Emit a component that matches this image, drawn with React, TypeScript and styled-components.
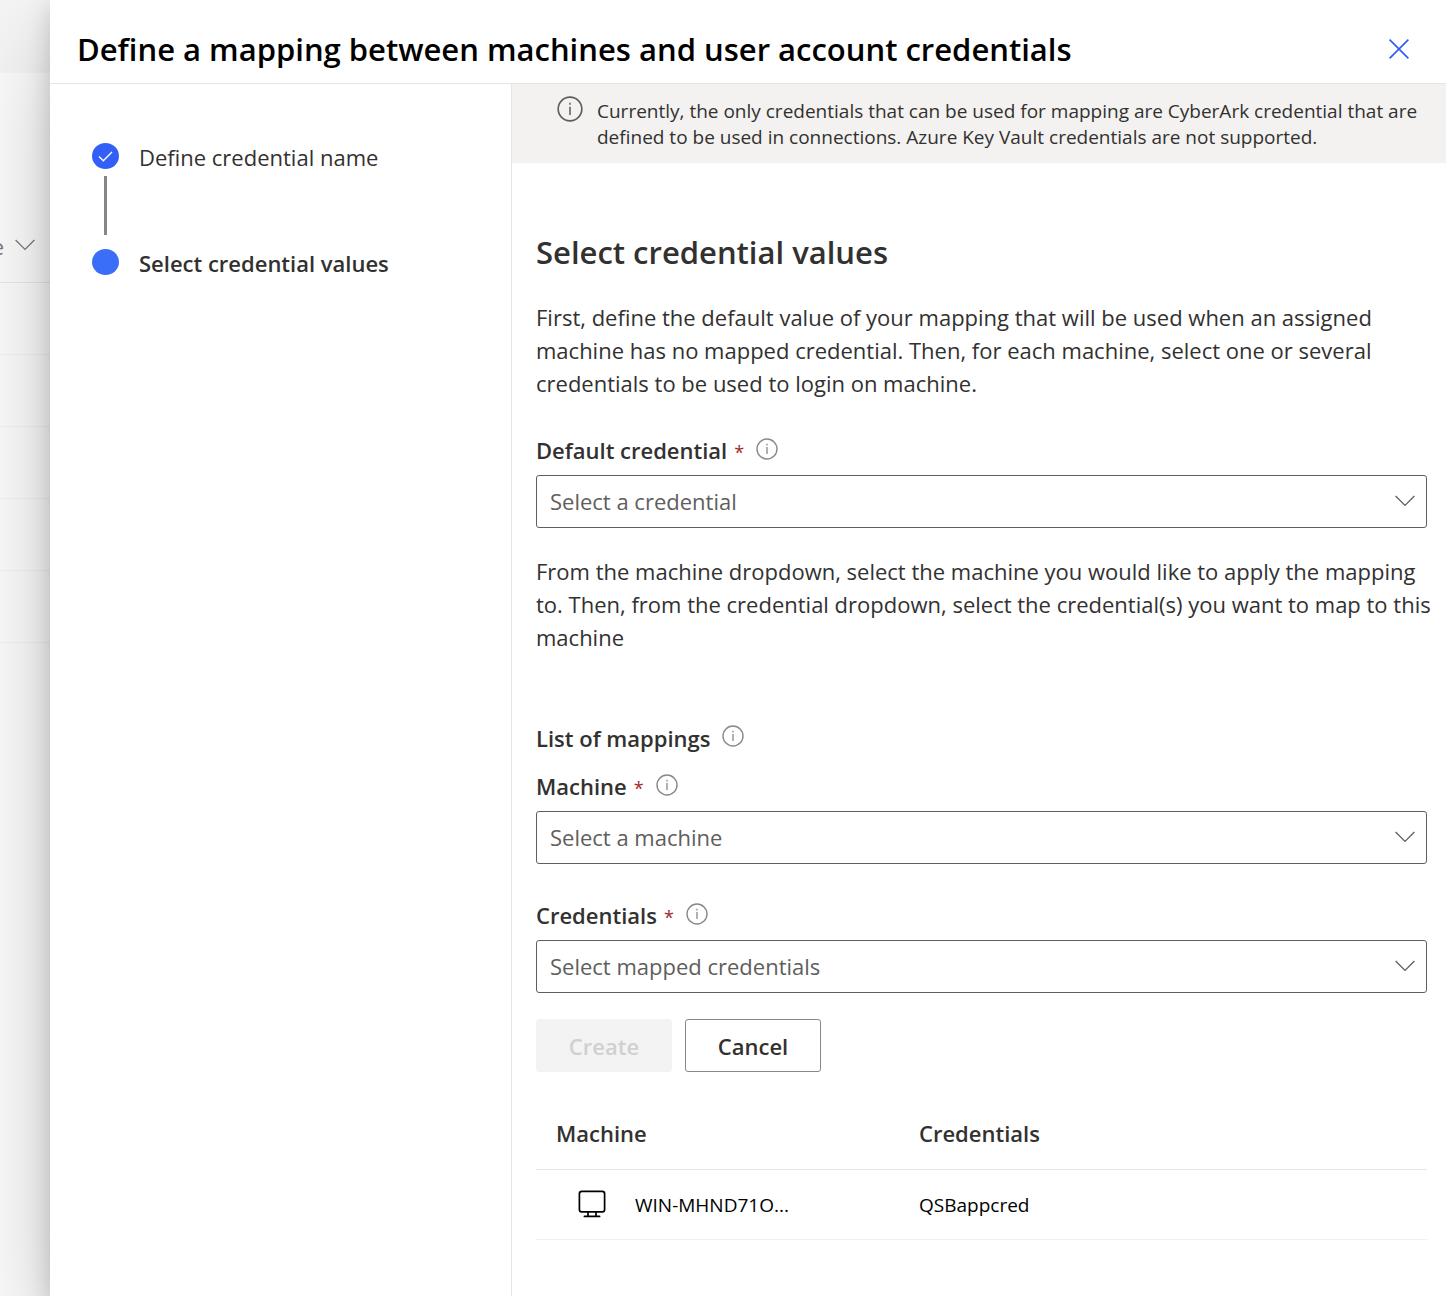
import React, { useId } from "react";
import styled, { createGlobalStyle } from "styled-components";

const GlobalStyle = createGlobalStyle`
  *, *::before, *::after { box-sizing: border-box; }
  body {
    margin: 0;
    background: #fff;
    color: #323130;
    font-family: "Open Sans", "Noto Sans", sans-serif;
    font-size: 22px;
    line-height: 33px;
  }
  h1, h2, p, ol { margin: 0; padding: 0; }
  button, select { font: inherit; color: inherit; }
`;

const Shell = styled.div`
  display: grid;
  grid-template-columns: 50px minmax(0, 1fr);
  min-height: 100vh;
  overflow: hidden;
`;

const Backdrop = styled.div`
  background: #fcfcfc;
  overflow: hidden;
`;

const BackdropHeader = styled.div`
  height: 73px;
  background: #f5f5f5;
`;

const BackdropColumn = styled.div`
  display: flex;
  align-items: flex-end;
  justify-content: flex-end;
  gap: 11px;
  height: 210px;
  padding: 0 15px 19px 0;
  border-bottom: 1px solid #e9e9e9;
  color: #7b7a79;

  svg { flex: none; margin-bottom: 12px; }
`;

const BackdropRow = styled.div`
  height: 72px;
  border-bottom: 1px solid #f3f3f3;
`;

const Panel = styled.section`
  position: relative;
  display: flex;
  flex-direction: column;
  background: #fff;
  box-shadow: 0 42px 94px rgba(0, 0, 0, 0.22), 0 8px 24px rgba(0, 0, 0, 0.18);
`;

const PanelHeader = styled.header`
  display: flex;
  align-items: center;
  justify-content: space-between;
  height: 84px;
  padding: 14px 33px 0 27px;
  border-bottom: 1px solid #e6e6e6;
`;

const Title = styled.h1`
  color: #000;
  font-size: 31px;
  line-height: 40px;
  font-weight: 600;
  white-space: nowrap;
`;

const CloseButton = styled.button`
  display: grid;
  place-items: center;
  width: 28px;
  height: 28px;
  padding: 0;
  border: 0;
  background: none;
  color: #2f5af5;
  cursor: pointer;
`;

const PanelBody = styled.div`
  display: grid;
  grid-template-columns: 462px minmax(0, 1fr);
  flex: 1;
`;

const Steps = styled.ol`
  display: flex;
  flex-direction: column;
  padding: 59px 20px 0 42px;
  border-right: 1px solid #e6e6e6;
  list-style: none;
`;

const Step = styled.li<{ $current?: boolean }>`
  display: flex;
  gap: 20px;
  line-height: 29px;
  font-weight: ${(p) => (p.$current ? 600 : 400)};
`;

const StepTrack = styled.span`
  display: flex;
  flex-direction: column;
  align-items: center;
  width: 27px;
`;

const StepDot = styled.span<{ $current?: boolean }>`
  display: grid;
  place-items: center;
  width: 27px;
  height: 26px;
  border-radius: 50%;
  background: ${(p) => (p.$current ? "#3b6ef8" : "#335ff9")};
  color: #fff;
`;

const StepLine = styled.span`
  width: 3px;
  height: 59px;
  margin: 7px 0 14px;
  background: #868686;
`;

const Content = styled.main`
  min-width: 0;
`;

const Notice = styled.div`
  display: flex;
  gap: 14px;
  padding: 14px 24px 13px 45px;
  background: #f3f2f1;
  font-size: 19px;
  line-height: 26px;

  svg { flex: none; margin-top: -2px; color: #605e5c; }
`;

const Form = styled.form`
  display: flex;
  flex-direction: column;
  padding: 66px 19px 56px 24px;
`;

const Heading = styled.h2`
  font-size: 31px;
  line-height: 46px;
  font-weight: 600;
`;

const Paragraph = styled.p<{ $top: number }>`
  margin: ${(p) => p.$top}px -8px 0 0;
`;

const LabelRow = styled.div<{ $top: number }>`
  display: flex;
  align-items: center;
  gap: 12px;
  height: 33px;
  margin-top: ${(p) => p.$top}px;
  font-weight: 600;

  svg { margin-bottom: 5px; color: #8a8886; }
`;

const Required = styled.span`
  padding-left: 7px;
  color: #a4262c;
  font-size: 18px;
  font-weight: 400;
`;

const SelectBox = styled.div`
  display: grid;
  align-items: center;
  margin-top: 7px;

  > * { grid-area: 1 / 1; }
  svg { justify-self: end; margin: 0 12px 2px 0; color: #605e5c; pointer-events: none; }
`;

const Select = styled.select`
  width: 100%;
  height: 53px;
  padding: 0 44px 0 13px;
  border: 1px solid #605e5c;
  border-radius: 3px;
  background: #fff;
  color: #605e5c;
  appearance: none;
`;

const Actions = styled.div`
  display: flex;
  gap: 13px;
  margin-top: 26px;
`;

const Button = styled.button`
  width: 136px;
  height: 53px;
  padding: 1px 0 0;
  border: 1px solid #8a8886;
  border-radius: 3px;
  background: #fff;
  font-weight: 600;

  &:disabled {
    border-color: #f3f3f3;
    background: #f3f3f3;
    color: #d0d0d0;
  }
`;

const Table = styled.table`
  width: 100%;
  margin-top: 26px;
  border-collapse: collapse;
  table-layout: fixed;
`;

const HeadCell = styled.th<{ $wide?: boolean }>`
  width: ${(p) => (p.$wide ? "auto" : "363px")};
  height: 71px;
  padding: 0 20px;
  border-bottom: 1px solid #e6e6e6;
  text-align: left;
  font-weight: 600;
`;

const Cell = styled.td`
  height: 70px;
  padding: 2px 20px 0;
  border-bottom: 1px solid #f0f0f0;
  color: #000;
  font-size: 19px;
`;

const Machine = styled.span`
  display: flex;
  align-items: center;
  gap: 29px;
  padding-left: 22px;

  svg { margin-bottom: 2px; }
`;

const InfoIcon = ({ size = 22 }: { size?: number }) => (
  <svg width={size} height={size} viewBox="0 0 22 22" fill="none" stroke="currentColor" strokeWidth="1.4" aria-hidden="true">
    <circle cx="11" cy="11" r="10" />
    <path d="M11 9v7M11 5.8v1.6" strokeWidth="1.3" />
  </svg>
);

const ChevronIcon = () => (
  <svg width="20" height="12" viewBox="0 0 20 12" fill="none" stroke="currentColor" strokeWidth="1.3" aria-hidden="true">
    <path d="M.6 1 10 10.4 19.4 1" />
  </svg>
);

const CloseIcon = () => (
  <svg width="20" height="20" viewBox="0 0 20 20" fill="none" stroke="currentColor" strokeWidth="1.6" aria-hidden="true">
    <path d="M.6.6l18.8 18.8M19.4.6.6 19.4" />
  </svg>
);

const CheckIcon = () => (
  <svg width="15" height="11" viewBox="0 0 15 11" fill="none" stroke="currentColor" strokeWidth="1.4" aria-hidden="true">
    <path d="M1 5.6 5.3 9.8 14 1.1" />
  </svg>
);

const MonitorIcon = () => (
  <svg width="28" height="28" viewBox="0 0 28 28" fill="none" stroke="currentColor" strokeWidth="1.7" strokeLinecap="round" aria-hidden="true">
    <rect x="1.4" y="1.4" width="25.2" height="20.4" rx="2.4" />
    <path d="M10 22v4M18 22v4M6.4 26.4h15.2" />
  </svg>
);

type FieldProps = { label: string; placeholder: string; top: number };

const Field = ({ label, placeholder, top }: FieldProps) => {
  const id = useId();
  return (
    <>
      <LabelRow $top={top}>
        <label htmlFor={id}>
          {label}
          <Required>*</Required>
        </label>
        <InfoIcon />
      </LabelRow>
      <SelectBox>
        <Select id={id} defaultValue="" required>
          <option value="">{placeholder}</option>
        </Select>
        <ChevronIcon />
      </SelectBox>
    </>
  );
};

export default function App() {
  return (
    <>
      <GlobalStyle />
      <Shell>
        <Backdrop>
          <BackdropHeader />
          <BackdropColumn>
            <span>e</span>
            <ChevronIcon />
          </BackdropColumn>
          {[1, 2, 3, 4, 5].map((row) => (
            <BackdropRow key={row} />
          ))}
        </Backdrop>
        <Panel>
          <PanelHeader>
            <Title>Define a mapping between machines and user account credentials</Title>
            <CloseButton type="button" aria-label="Close">
              <CloseIcon />
            </CloseButton>
          </PanelHeader>
          <PanelBody>
            <Steps>
              <Step>
                <StepTrack>
                  <StepDot>
                    <CheckIcon />
                  </StepDot>
                  <StepLine />
                </StepTrack>
                <span>Define credential name</span>
              </Step>
              <Step $current aria-current="step">
                <StepTrack>
                  <StepDot $current />
                </StepTrack>
                <span>Select credential values</span>
              </Step>
            </Steps>
            <Content>
              <Notice>
                <InfoIcon size={26} />
                <p>
                  Currently, the only credentials that can be used for mapping are CyberArk credential that are defined
                  to be used in connections. Azure Key Vault credentials are not supported.
                </p>
              </Notice>
              <Form onSubmit={(event) => event.preventDefault()}>
                <Heading>Select credential values</Heading>
                <Paragraph $top={26}>
                  First, define the default value of your mapping that will be used when an assigned machine has no
                  mapped credential. Then, for each machine, select one or several credentials to be used to login on
                  machine.
                </Paragraph>
                <Field label="Default credential" placeholder="Select a credential" top={35} />
                <Paragraph $top={27}>
                  From the machine dropdown, select the machine you would like to apply the mapping to. Then, from the
                  credential dropdown, select the credential(s) you want to map to this machine
                </Paragraph>
                <LabelRow $top={68}>
                  <span>List of mappings</span>
                  <InfoIcon />
                </LabelRow>
                <Field label="Machine" placeholder="Select a machine" top={16} />
                <Field label="Credentials" placeholder="Select mapped credentials" top={36} />
                <Actions>
                  <Button type="submit" disabled>
                    Create
                  </Button>
                  <Button type="button">Cancel</Button>
                </Actions>
                <Table>
                  <thead>
                    <tr>
                      <HeadCell scope="col">Machine</HeadCell>
                      <HeadCell scope="col" $wide>
                        Credentials
                      </HeadCell>
                    </tr>
                  </thead>
                  <tbody>
                    <tr>
                      <Cell>
                        <Machine>
                          <MonitorIcon />
                          WIN-MHND71O...
                        </Machine>
                      </Cell>
                      <Cell>QSBappcred</Cell>
                    </tr>
                  </tbody>
                </Table>
              </Form>
            </Content>
          </PanelBody>
        </Panel>
      </Shell>
    </>
  );
}
